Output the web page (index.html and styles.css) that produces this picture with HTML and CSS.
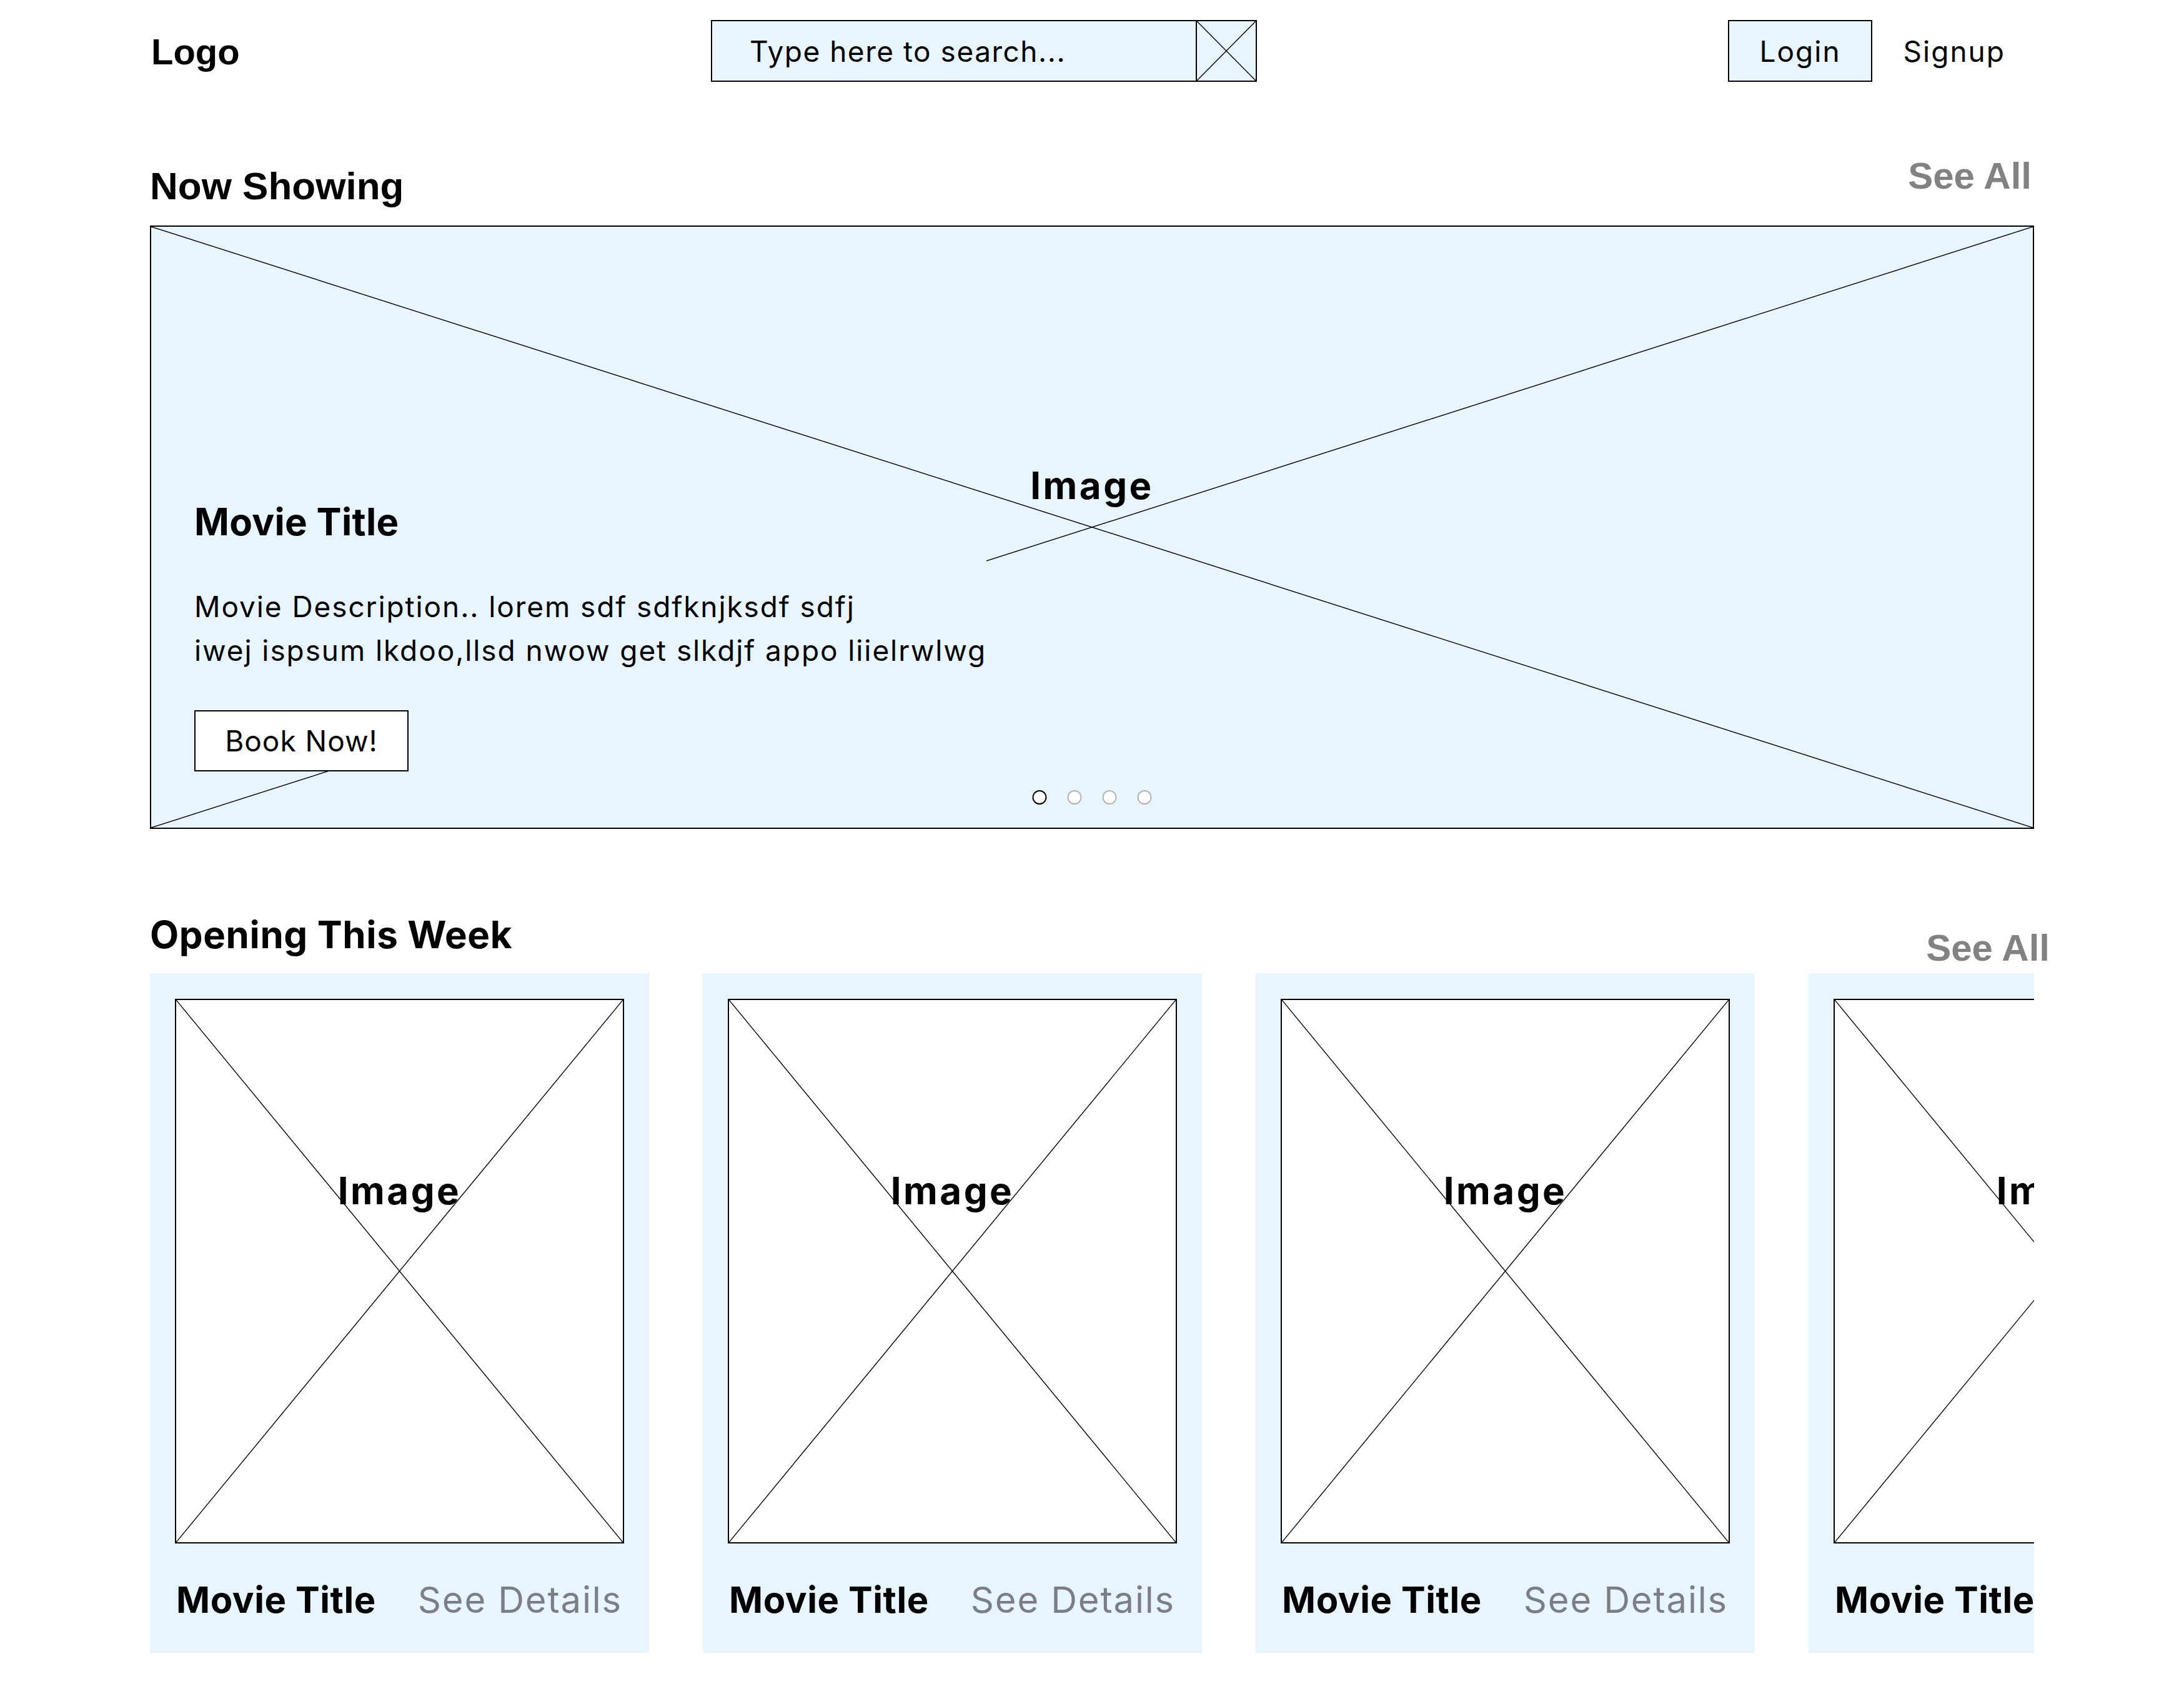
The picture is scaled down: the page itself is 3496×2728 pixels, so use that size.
FILE: index.html
```html
<!DOCTYPE html>
<html lang="en">
<head>
<meta charset="utf-8">
<title>Movies</title>
<link rel="stylesheet" href="styles.css">
</head>
<body>
<div class="page">
  <header class="topbar">
    <div class="logo">Logo</div>
    <form class="search">
      <div class="search-field">Type here to search...</div>
      <button class="search-btn" type="button" aria-label="Search">
        <svg class="xlines" viewBox="0 0 100 100" preserveAspectRatio="none"><line x1="0" y1="0" x2="100" y2="100"/><line x1="100" y1="0" x2="0" y2="100"/></svg>
      </button>
    </form>
    <nav class="auth">
      <button class="btn btn-login" type="button">Login</button>
      <button class="btn btn-signup" type="button">Signup</button>
    </nav>
  </header>

  <section class="now-showing">
    <div class="section-head head-now">
      <h2 class="head-title helv">Now Showing</h2>
      <a class="see-all">See All</a>
    </div>
    <div class="hero">
      <svg class="xlines" viewBox="0 0 100 100" preserveAspectRatio="none"><line x1="0" y1="0" x2="100" y2="100"/><line x1="100" y1="0" x2="0" y2="100"/></svg>
      <span class="img-label hero-label">Image</span>
      <div class="hero-info">
        <h3 class="hero-title">Movie Title</h3>
        <p class="hero-desc">Movie Description.. lorem sdf sdfknjksdf sdfj<br>iwej ispsum lkdoo,llsd nwow get slkdjf appo liielrwlwg</p>
        <button class="btn-book" type="button">Book Now!</button>
      </div>
      <div class="dots">
        <span class="dot active"></span><span class="dot"></span><span class="dot"></span><span class="dot"></span>
      </div>
    </div>
  </section>

  <section class="opening">
    <div class="section-head head-opening">
      <h2 class="head-title">Opening This Week</h2>
      <a class="see-all see-all-out">See All</a>
    </div>
    <div class="cards">
      <article class="card">
        <div class="poster">
          <svg class="xlines" viewBox="0 0 100 100" preserveAspectRatio="none"><line x1="0" y1="0" x2="100" y2="100"/><line x1="100" y1="0" x2="0" y2="100"/></svg>
          <span class="img-label poster-label">Image</span>
        </div>
        <div class="card-foot"><span class="card-title">Movie Title</span><a class="see-details">See Details</a></div>
      </article>
      <article class="card">
        <div class="poster">
          <svg class="xlines" viewBox="0 0 100 100" preserveAspectRatio="none"><line x1="0" y1="0" x2="100" y2="100"/><line x1="100" y1="0" x2="0" y2="100"/></svg>
          <span class="img-label poster-label">Image</span>
        </div>
        <div class="card-foot"><span class="card-title">Movie Title</span><a class="see-details">See Details</a></div>
      </article>
      <article class="card">
        <div class="poster">
          <svg class="xlines" viewBox="0 0 100 100" preserveAspectRatio="none"><line x1="0" y1="0" x2="100" y2="100"/><line x1="100" y1="0" x2="0" y2="100"/></svg>
          <span class="img-label poster-label">Image</span>
        </div>
        <div class="card-foot"><span class="card-title">Movie Title</span><a class="see-details">See Details</a></div>
      </article>
      <article class="card">
        <div class="poster">
          <svg class="xlines" viewBox="0 0 100 100" preserveAspectRatio="none"><line x1="0" y1="0" x2="100" y2="100"/><line x1="100" y1="0" x2="0" y2="100"/></svg>
          <span class="img-label poster-label">Image</span>
        </div>
        <div class="card-foot"><span class="card-title">Movie Title</span><a class="see-details">See Details</a></div>
      </article>
    </div>
  </section>
</div>
</body>
</html>
```

FILE: styles.css
```css
* { box-sizing: border-box; }

html, body {
  margin: 0;
  background: #ffffff;
  color: #000000;
  font-family: "Inter", "Noto Sans", sans-serif;
}

.page {
  width: 3496px;
  padding: 32px 240px 82px;
}

/* ---------- top bar ---------- */
.topbar {
  display: flex;
  justify-content: space-between;
  align-items: center;
  height: 99px;
}

.logo {
  font-family: "Liberation Sans", Arial, sans-serif;
  font-weight: 700;
  font-size: 58px;
  padding-left: 2px;
  padding-top: 2px;
}

.search {
  display: flex;
  width: 874px;
  height: 99px;
  margin: 0;
  border: 2px solid #000;
  background: #e8f4fe;
}

.search-field {
  flex: 1;
  display: flex;
  align-items: center;
  padding-left: 60px;
  font-size: 46px;
  letter-spacing: 1.5px;
  color: #000;
}

.search-btn {
  position: relative;
  width: 96px;
  padding: 0;
  border: 0;
  border-left: 2px solid #000;
  background: #e8f4fe;
}

.xlines {
  position: absolute;
  left: 0;
  top: 0;
  width: 100%;
  height: 100%;
  display: block;
}

.xlines line {
  stroke: #000;
  stroke-width: 1.4;
  vector-effect: non-scaling-stroke;
}

.auth {
  display: flex;
  align-items: center;
}

.btn {
  height: 99px;
  padding: 0 48px;
  font-family: inherit;
  font-size: 46px;
  letter-spacing: 2px;
  color: #000;
  border: 2px solid transparent;
  background: transparent;
}

.btn-login {
  border-color: #000;
  background: #e8f4fe;
}

.btn-signup {
  padding-right: 44px;
}

/* ---------- section heads ---------- */
.section-head {
  display: flex;
  justify-content: space-between;
  align-items: flex-end;
}

.head-title {
  margin: 0;
  font-size: 60px;
  line-height: 60px;
  font-weight: 700;
}

.helv {
  font-family: "Liberation Sans", Arial, sans-serif;
  font-size: 62px;
}

.see-all {
  font-family: "Liberation Sans", Arial, sans-serif;
  font-weight: 700;
  font-size: 60px;
  line-height: 59px;
  color: #828282;
}

.head-now {
  margin-top: 121px;
  margin-bottom: 33px;
}

.head-now .see-all {
  margin-bottom: 17px;
  margin-right: 4px;
}

.head-opening {
  margin-top: 139px;
  margin-bottom: 11px;
}

.head-opening .head-title {
  margin-bottom: 21px;
  letter-spacing: 0.6px;
}

.see-all-out {
  margin-right: -25px;
}

/* ---------- hero ---------- */
.hero {
  position: relative;
  height: 966px;
  display: flex;
  align-items: flex-end;
  padding: 0 0 90px 69px;
  border: 2px solid #000;
  background: #e8f4fe;
}

.img-label {
  position: absolute;
  left: 50%;
  transform: translateX(-50%);
  font-size: 60px;
  line-height: 60px;
  font-weight: 700;
  letter-spacing: 3.5px;
  white-space: nowrap;
}

.hero-label {
  top: 384px;
}

.hero-info {
  position: relative;
  background: #e8f4fe;
}

.hero-title {
  margin: 0 0 65px;
  font-size: 60px;
  line-height: 72px;
  font-weight: 700;
  letter-spacing: 0.3px;
}

.hero-desc {
  margin: 0 0 61px;
  font-size: 46px;
  line-height: 70px;
  letter-spacing: 1.9px;
}

.btn-book {
  display: block;
  width: 343px;
  height: 98px;
  padding: 0;
  font-family: inherit;
  font-size: 46px;
  letter-spacing: 1px;
  color: #000;
  border: 2px solid #000;
  background: #ffffff;
}

.dots {
  position: absolute;
  left: 50%;
  bottom: 37px;
  transform: translateX(-50%);
  display: flex;
  gap: 33px;
}

.dot {
  width: 23px;
  height: 23px;
  border-radius: 50%;
  border: 2px solid #b4b4b4;
  background: #ffffff;
}

.dot.active {
  border-color: #000;
}

/* ---------- cards ---------- */
.cards {
  display: flex;
  gap: 86px;
  overflow: hidden;
}

.card {
  flex: 0 0 799px;
  padding: 41px 40px 50px;
  background: #e8f4fe;
}

.poster {
  position: relative;
  height: 872px;
  border: 2px solid #000;
  background: #ffffff;
}

.poster-label {
  top: 275px;
}

.card-foot {
  display: flex;
  justify-content: space-between;
  align-items: baseline;
  margin-top: 55px;
  line-height: 70px;
  white-space: nowrap;
}

.card-title {
  padding-left: 2px;
  font-size: 58px;
  font-weight: 700;
  letter-spacing: 0.6px;
}

.see-details {
  padding-right: 3px;
  font-size: 58px;
  color: #7b7f85;
  letter-spacing: 1.8px;
}
```
